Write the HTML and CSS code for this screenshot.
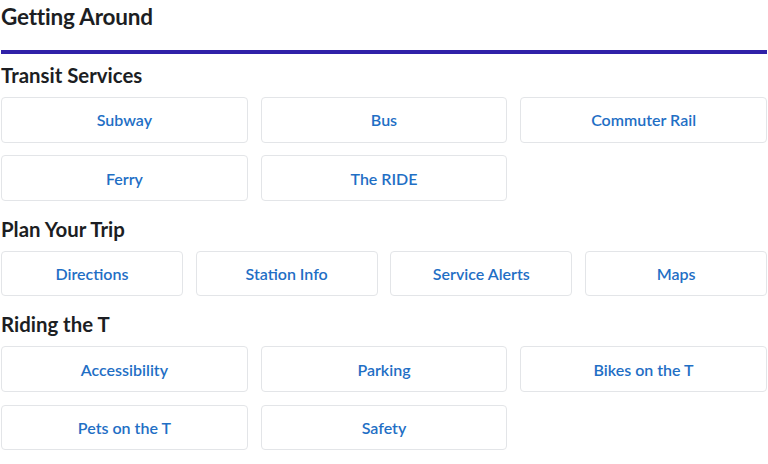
FILE: index.html
```html
<!DOCTYPE html>
<html lang="en">
<head>
<meta charset="utf-8">
<title>Getting Around</title>
<link rel="stylesheet" href="styles.css">
</head>
<body>
<div class="page">
  <h1 class="title">Getting Around</h1>

  <section class="group">
    <h2 class="group-title">Transit Services</h2>
    <div class="grid grid-3">
      <a class="tile" href="#">Subway</a>
      <a class="tile" href="#">Bus</a>
      <a class="tile" href="#">Commuter Rail</a>
      <a class="tile" href="#">Ferry</a>
      <a class="tile" href="#">The RIDE</a>
    </div>
  </section>

  <section class="group">
    <h2 class="group-title">Plan Your Trip</h2>
    <div class="grid grid-4">
      <a class="tile" href="#">Directions</a>
      <a class="tile" href="#">Station Info</a>
      <a class="tile" href="#">Service Alerts</a>
      <a class="tile" href="#">Maps</a>
    </div>
  </section>

  <section class="group">
    <h2 class="group-title">Riding the T</h2>
    <div class="grid grid-3">
      <a class="tile" href="#">Accessibility</a>
      <a class="tile" href="#">Parking</a>
      <a class="tile" href="#">Bikes on the T</a>
      <a class="tile" href="#">Pets on the T</a>
      <a class="tile" href="#">Safety</a>
    </div>
  </section>
</div>
</body>
</html>
```

FILE: styles.css
```css
* { box-sizing: border-box; }

html, body {
  margin: 0;
  padding: 0;
  background: #ffffff;
}

body {
  font-family: Lato, "Open Sans", "Liberation Sans", sans-serif;
  color: #1c1e23;
}

.page {
  padding: 0 1px;
}

.title {
  margin: 0;
  padding: 3px 0 19px;
  font-size: 22.5px;
  line-height: 28px;
  font-weight: 700;
  letter-spacing: -0.2px;
  border-bottom: 4px solid #3021a8;
}

.group-title {
  margin: 9px 0 10px;
  font-size: 20.4px;
  line-height: 24px;
  font-weight: 700;
}

.group {
  margin-bottom: 16px;
}

.grid {
  display: grid;
  gap: 12.8px;
}

.grid-3 { grid-template-columns: repeat(3, 1fr); }
.grid-4 { grid-template-columns: repeat(4, 1fr); }

.tile {
  display: flex;
  align-items: center;
  justify-content: center;
  height: 45.5px;
  border: 1px solid #e3e5e8;
  border-radius: 4px;
  background: #ffffff;
  color: #1f6fc5;
  font-size: 16px;
  font-weight: 600;
  text-decoration: none;
}
```
